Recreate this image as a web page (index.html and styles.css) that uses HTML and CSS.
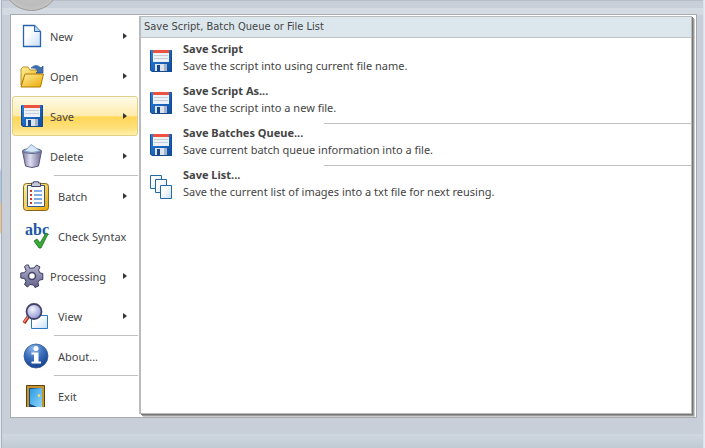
FILE: index.html
```html
<!DOCTYPE html>
<html lang="en">
<head>
<meta charset="utf-8">
<title>Application menu</title>
<link rel="stylesheet" href="styles.css">
</head>
<body>
<svg class="defs" aria-hidden="true">
  <defs>
    <linearGradient id="paper" x1="0" y1="0" x2="1" y2="1"><stop offset=".35" stop-color="#fff"/><stop offset="1" stop-color="#c5dcf8"/></linearGradient>
    <linearGradient id="gold" x1="0" y1="0" x2="1" y2="1"><stop offset="0" stop-color="#fff0a0"/><stop offset="1" stop-color="#eaa800"/></linearGradient>
    <linearGradient id="blue" x1="0" y1="0" x2="1" y2="1"><stop offset="0" stop-color="#2b83de"/><stop offset="1" stop-color="#0d4b9f"/></linearGradient>
    <linearGradient id="steel" x1="0" y1="0" x2="1" y2="0"><stop offset="0" stop-color="#77779b"/><stop offset=".4" stop-color="#dedff0"/><stop offset="1" stop-color="#6d6c96"/></linearGradient>
    <linearGradient id="gear" x1="0" y1="0" x2="0" y2="1"><stop offset="0" stop-color="#b4b4ce"/><stop offset="1" stop-color="#62628a"/></linearGradient>
    <radialGradient id="lens" cx=".4" cy=".35" r=".7"><stop offset="0" stop-color="#f4f5ff"/><stop offset="1" stop-color="#8990cd"/></radialGradient>
    <radialGradient id="ball" cx=".4" cy=".2" r=".8"><stop offset="0" stop-color="#92b7ea"/><stop offset=".5" stop-color="#3c6fbd"/><stop offset="1" stop-color="#17428e"/></radialGradient>
    <linearGradient id="door" x1="0" y1="0" x2="1" y2="1"><stop offset="0" stop-color="#2d9ae3"/><stop offset="1" stop-color="#8dd6fb"/></linearGradient>
    <symbol id="floppy" viewBox="0 0 22 22">
      <path d="M0 0h22v22H2l-2-2z" fill="url(#blue)"/>
      <path d="M3 0h16v12H3z" fill="#edf2f7"/><path d="M3 0h16v3H3z" fill="#ef5140"/>
      <path d="M4 5.500h14M4 8.500h14" stroke="#c6ced9"/>
      <path d="M5 14h12v7H5z" fill="#dce4ee"/><path d="M7 15h3v6H7z" fill="#17468b"/><path d="M14 14h3v7h-3z" fill="#a7b5c9"/>
      <path d="M.5 1v19l1.500 1.500h19.500V1" fill="none" stroke="#164a8e"/>
    </symbol>
  </defs>
</svg>
<div class="window">
  <div class="orb" aria-hidden="true"></div>
  <main class="frame">
    <nav class="menu" aria-label="Application menu">
      <button class="item more"><svg viewBox="0 0 24 24"><path d="M3.500 1.500h11l6 6v15h-17z" fill="url(#paper)" stroke="#2864ad" stroke-width="1.300"/><path d="M14.500 1.500v6h6" fill="#b9d5f4" stroke="#2864ad"/></svg><span>New</span></button>
      <button class="item more"><svg viewBox="0 0 24 24"><path d="M1 5l2-2h5l2 3h10v5H5L1 21z" fill="url(#gold)" stroke="#b89225"/><path d="M5 10h18.500l-3 13H1z" fill="url(#gold)" stroke="#b27c04"/><path d="M11 4Q16-1 21 4l2-2v7h-7l2-2Q15 3 11 4z" fill="#3f70b5" stroke="#264c88" stroke-width=".7"/></svg><span>Open</span></button>
      <button class="item more selected"><svg viewBox="-1 -1 24 24"><use href="#floppy" width="22" height="22"/></svg><span>Save</span></button>
      <button class="item more"><svg viewBox="0 0 24 24"><path d="M2.500 7h19l-3 15q-6.500 3-13 0z" fill="url(#steel)" stroke="#57567f"/><ellipse cx="12" cy="7" rx="9.500" ry="2.500" fill="#8787aa" stroke="#6d6c93"/><path d="M4 7l4-3 3-3.500 5 3.500 4 3q-8 3-16 0z" fill="#d5e9fa" stroke="#7594b8" stroke-width=".8"/></svg><span>Delete</span></button>
      <button class="item wide more rule"><svg viewBox="0 0 28 30"><rect x="1.500" y="2.500" width="25" height="27" rx="3" fill="url(#gold)" stroke="#86651c"/><path d="M5.500 4.500h17v21h-17z" fill="#fff" stroke="#31578f"/><path d="M9.500 5.500V2h2V.8h5V2h2v3.500z" fill="#c7c8dc" stroke="#454468"/><path d="M8 10h2m-2 8h2" stroke="#d73527" stroke-width="2"/><path d="M8 14h2m-2 8h2" stroke="#d73527" stroke-width="2"/><path d="M12 10h8m-8 4h8m-8 4h8m-8 4h8" stroke="#5b94d5" stroke-width="1.500"/></svg><span>Batch</span></button>
      <button class="item wide"><svg viewBox="0 0 28 30"><text class="abc" x="3" y="14">abc</text><path d="M12 20l3-2 3 4 6-10 2 1-7 14h-2z" fill="#39a937" stroke="#176e21" stroke-width=".8"/></svg><span>Check Syntax</span></button>
      <button class="item more"><svg viewBox="0 0 24 24"><path d="M9.500 4.200L8.500 1h-2l-2 1.500 1.500 4-1.500 2.200L.8 9v5l3.700.5 1.500 3-1.500 3 3 2.500 2.500-2.500 3.500.5 1.500 2.500 3.500-1.500-.5-3.500 1.500-2.500 3.300-.5V9.500L20 9l-1.500-3 1.500-3-3.500-2-2.500 3z" fill="url(#gear)" stroke="#3b3a5f"/><circle cx="12" cy="12" r="3.500" fill="#fff" stroke="#424166" stroke-width="1.500"/></svg><span>Processing</span></button>
      <button class="item wide more"><svg viewBox="0 0 28 30"><path d="M9.500 14.500h16v13h-16z" fill="url(#paper)" stroke="#2978c1"/><path d="M6 16l-4 6" stroke="#a62b1c" stroke-width="3.500"/><path d="M6 16l-4 5" stroke="#ef8b70" stroke-width="1.500"/><circle cx="12" cy="10.500" r="7.500" fill="url(#lens)" stroke="#45436a" stroke-width="1.800"/></svg><span>View</span></button>
      <button class="item wide rule"><svg viewBox="0 0 28 30"><circle cx="14" cy="15" r="12" fill="url(#ball)" stroke="#315d9d" stroke-width=".8"/><circle cx="14" cy="7.500" r="2.500" fill="#fff"/><path d="M9.500 11.500h7v9h2.500v2H9.500v-2H12v-7H9.500z" fill="#fff"/></svg><span>About...</span></button>
      <button class="item wide rule"><svg viewBox="0 0 28 30"><path d="M4.500 26V4.500h18V26" fill="#18528c" stroke="#5d4311"/><path d="M6 26V6h15v20" fill="none" stroke="#c6942f" stroke-width="2"/><path d="M7 7h4l9 2v17H7z" fill="#164a80"/><path d="M8 8l12-1v19h-5l-7-3z" fill="url(#door)"/><circle cx="17" cy="14.500" r="1.300" fill="#ffe45d"/></svg><span>Exit</span></button>
    </nav>
    <section class="panel" aria-labelledby="panel-title">
      <h1 id="panel-title">Save Script, Batch Queue or File List</h1>
      <button class="action"><svg viewBox="0 0 22 24"><use href="#floppy" width="22" height="22" y="1"/></svg><span><strong>Save Script</strong><small>Save the script into using current file name.</small></span></button>
      <button class="action"><svg viewBox="0 0 22 24"><use href="#floppy" width="22" height="22" y="1"/></svg><span><strong>Save Script As...</strong><small>Save the script into a new file.</small></span></button>
      <button class="action rule"><svg viewBox="0 0 22 24"><use href="#floppy" width="22" height="22" y="1"/></svg><span><strong>Save Batches Queue...</strong><small>Save current batch queue information into a file.</small></span></button>
      <button class="action rule"><svg viewBox="0 0 22 24"><g fill="url(#paper)" stroke="#2568aa"><path d="M.5.5h11v13H.5z"/><path d="M5.500 4.500h11v13h-11z"/><path d="M10.500 10.500h11v13h-11z"/></g></svg><span><strong>Save List...</strong><small>Save the current list of images into a txt file for next reusing.</small></span></button>
    </section>
  </main>
</div>
</body>
</html>
```
FILE: styles.css
```css
* { box-sizing: border-box; }

body {
  margin: 0;
  background: linear-gradient(#e4ebf3 0 168px, #a9c8ee 172px 200px, #f3c37d 205px 232px, #e4ebf3 234px) 0 0 / 2px 100% no-repeat #e4ebf3;
  color: #444;
  font: 11px/16px "Noto Sans", "Open Sans", sans-serif;
}

.defs { position: absolute; width: 0; height: 0; }

.window {
  position: relative;
  display: flex;
  min-height: 100vh;
  margin: 0 1px;
  padding: 14px 6px 30px 8px;
  overflow: hidden;
  border-left: 1px solid #a9b0b9;
  border-right: 1px solid #dce2e9;
  background: linear-gradient(to top, #c0cad3, #d0d8df 14px, #c9cfd8 14px);
}

.window::before {
  content: "";
  position: absolute;
  inset: 0 0 auto;
  height: 14px;
  border-top: 1px solid #b7bec8;
  background: linear-gradient(#c9cfd8 50%, #d4dae1 50%);
}

.orb {
  position: absolute;
  top: -46px;
  left: 1px;
  width: 57px;
  height: 57px;
  border: 1px solid #999;
  border-radius: 50%;
  background: radial-gradient(#c8c8c8, #bcbcbc 60%, #ddd);
}

.frame {
  position: relative;
  display: grid;
  grid-template-columns: 128px 1fr;
  flex: 1;
  border: 1px solid #a6abb1;
  background: #fff;
}

.menu { padding-top: 1px; }

button {
  border: 0;
  background: none;
  color: inherit;
  font: inherit;
  text-align: left;
}

.item {
  position: relative;
  display: flex;
  align-items: center;
  gap: 6px;
  width: 100%;
  height: 40px;
  padding: 0 0 0 9px;
}

.item span { padding-top: 2px; }
.item svg { flex: none; width: 24px; height: 24px; }
.item.wide { padding-left: 11px; gap: 8px; }
.item.wide svg { width: 28px; height: 30px; }

.more::after {
  content: "";
  margin: 0 12px 0 auto;
  border: solid transparent;
  border-width: 3px 0 3px 4px;
  border-left-color: #333;
}

.selected {
  width: auto;
  min-width: calc(100% - 2px);
  margin-left: 1px;
  padding-left: 7px;
  border: 1px solid #e2cf86;
  border-radius: 3px;
  background: linear-gradient(#fffbe9, #ffebac 50%, #ffd756 52%, #ffdf78 80%, #fff0aa);
}

.selected::after { margin-right: 10px; }

.rule::before {
  content: "";
  position: absolute;
  top: -1px;
  right: 1px;
  left: 43px;
  border-top: 1px solid #c0c0c0;
}

.abc { fill: #1b57a6; font: bold 16px "Liberation Serif", serif; }

.panel {
  margin: 1px 4px 3px 1px;
  border: 1px solid #bababa;
  background: #fff;
  box-shadow: 1px 1px #777, 2px 2px #999, 3px 3px #ccc, -1px 0 #bbb;
}

h1 {
  height: 21px;
  margin: 0 0 1px;
  padding: 0 3px;
  border-bottom: 1px solid #c0c4c7;
  background: #dce7ed;
  font: 11px/20px "DejaVu Sans Condensed", "DejaVu Sans", sans-serif;
}

.action {
  position: relative;
  display: flex;
  align-items: flex-start;
  gap: 11px;
  width: 100%;
  height: 42px;
  padding: 1px 9px;
}

.action > svg { flex: none; width: 22px; height: 24px; margin-top: 9px; }
.action strong, .action small { display: block; font-size: 11px; line-height: 17px; }
.action.rule::before { top: 0; right: 0; left: 183px; }
```
